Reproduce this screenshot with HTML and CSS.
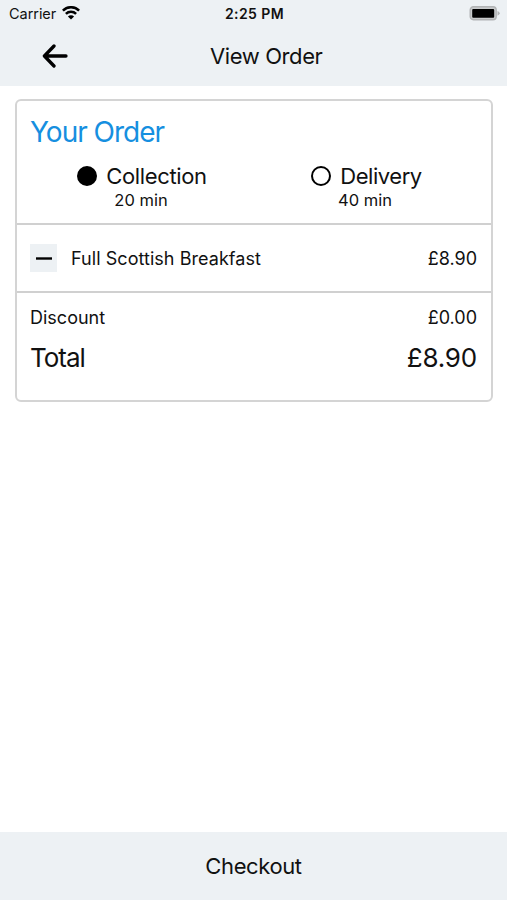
FILE: index.html
```html
<!DOCTYPE html>
<html lang="en">
<head>
<meta charset="utf-8">
<title>View Order</title>
<link rel="stylesheet" href="styles.css">
</head>
<body>
<header class="header">
  <div class="status">
    <div class="carrier"><span class="carrier-name">Carrier</span>
      <svg class="wifi" width="18" height="14" viewBox="0 0 18 14"><path d="M.9 4.6a11.4 11.4 0 0 1 16.2 0M3.9 7.8a7.2 7.2 0 0 1 10.2 0" fill="none" stroke="#000" stroke-width="2.5"/><path d="M5.9 10.5a4.4 4.4 0 0 1 6.2 0L9 13.6z"/></svg>
    </div>
    <span class="time">2:25 PM</span>
    <svg class="battery" width="31" height="15" viewBox="0 0 31 15"><rect x="1.2" y=".8" width="26" height="13" rx="3.2" fill="#c9cbcc" stroke="#b2b4b5" stroke-width="1.4"/><rect x="3.2" y="3" width="22" height="8.8" rx="1"/><path d="M28.5 4.9q2.2 1 2.2 2.4t-2.2 2.4z" fill="#b2b4b5"/></svg>
  </div>
  <nav class="nav">
    <svg class="back" width="26" height="24" viewBox="0 0 26 24"><path d="M12 2 2.4 12l9.6 10M2.8 12H24" fill="none" stroke="#000" stroke-width="3.3" stroke-linecap="round" stroke-linejoin="round"/></svg>
    <h1 class="title">View Order</h1>
  </nav>
</header>
<main class="main">
  <section class="card">
    <div class="summary">
      <h2 class="heading">Your Order</h2>
      <div class="options">
        <div class="option collection"><div class="choice"><span class="radio selected"></span><span class="label">Collection</span></div><span class="wait">20 min</span></div>
        <div class="option delivery"><div class="choice"><span class="radio"></span><span class="label">Delivery</span></div><span class="wait">40 min</span></div>
      </div>
    </div>
    <div class="item">
      <span class="minus"><svg width="16" height="3" viewBox="0 0 16 3"><path d="M0 1.5h16" stroke="#000" stroke-width="2.4"/></svg></span>
      <span class="name">Full Scottish Breakfast</span><span class="price">£8.90</span>
    </div>
    <div class="totals">
      <div class="row discount"><span class="discount-label">Discount</span><span class="price">£0.00</span></div>
      <div class="row total"><span class="total-label">Total</span><span class="total-price">£8.90</span></div>
    </div>
  </section>
</main>
<footer class="footer"><span class="checkout">Checkout</span></footer>
</body>
</html>
```
FILE: styles.css
```css
* { box-sizing: border-box; }
body { margin: 0; height: 900px; display: flex; flex-direction: column; background: #fff; color: #111; font-family: Inter, "Liberation Sans", sans-serif; overflow: hidden; }
h1, h2 { margin: 0; font-weight: 400; }
span, h1, h2 { white-space: nowrap; }
svg { display: block; flex: none; }
.header { height: 86px; background: #edf1f4; }
.status { height: 27px; padding: 0 7px 0 9px; display: grid; grid-template-columns: 1fr auto 1fr; align-items: center; font-size: 14.5px; }
.carrier { display: flex; align-items: center; gap: 6px; }
.carrier-name { letter-spacing: -.05px; }
.wifi { margin-top: -2px; }
.time { font-weight: 600; font-size: 14px; letter-spacing: .4px; }
.battery { justify-self: end; }
.nav { height: 58px; padding-left: 42px; display: flex; align-items: center; }
.title { margin-left: 142px; font-size: 22px; line-height: 28px; letter-spacing: -.4px; }
.main { flex: 1; padding: 13px 14px 0 15px; }
.card { height: 303px; border: 2px solid #d4d4d4; border-radius: 6px; }
.summary { height: 122px; padding: 14px 13px 0; }
.heading { color: #168fe0; font-size: 28px; line-height: 34px; letter-spacing: -1px; }
.options { display: flex; padding-top: 14px; }
.option { display: flex; flex-direction: column; align-items: center; }
.collection { margin-left: 47px; width: 130px; }
.delivery { margin-left: 104px; width: 110px; }
.choice { display: flex; align-items: center; gap: 9px; height: 26px; font-size: 22px; letter-spacing: -.35px; }
.delivery .choice { margin-left: 1px; letter-spacing: -.45px; }
.radio { width: 20px; height: 20px; border: 2px solid #000; border-radius: 50%; flex: none; }
.selected { background: #000; }
.wait { margin-left: -2px; font-size: 16.5px; line-height: 22px; }
.item { height: 70px; border-top: 2px solid #d0d0d0; border-bottom: 2px solid #d0d0d0; padding: 0 14px 0 13px; display: flex; align-items: center; font-size: 18px; }
.minus { width: 27px; height: 28px; margin-right: 14px; background: #edf1f4; display: grid; place-items: center; }
.name { letter-spacing: .05px; }
.item .price { margin-left: auto; }
.totals { padding: 11px 14px 0 13px; }
.row { display: flex; justify-content: space-between; }
.discount { font-size: 18px; line-height: 28px; }
.total { font-size: 26px; line-height: 34px; padding-top: 9px; }
.total-label { letter-spacing: -1px; }
.total-price { letter-spacing: -.2px; }
.footer { height: 68px; background: #edf1f4; display: grid; place-items: center; font-size: 22px; letter-spacing: -.4px; }
```
